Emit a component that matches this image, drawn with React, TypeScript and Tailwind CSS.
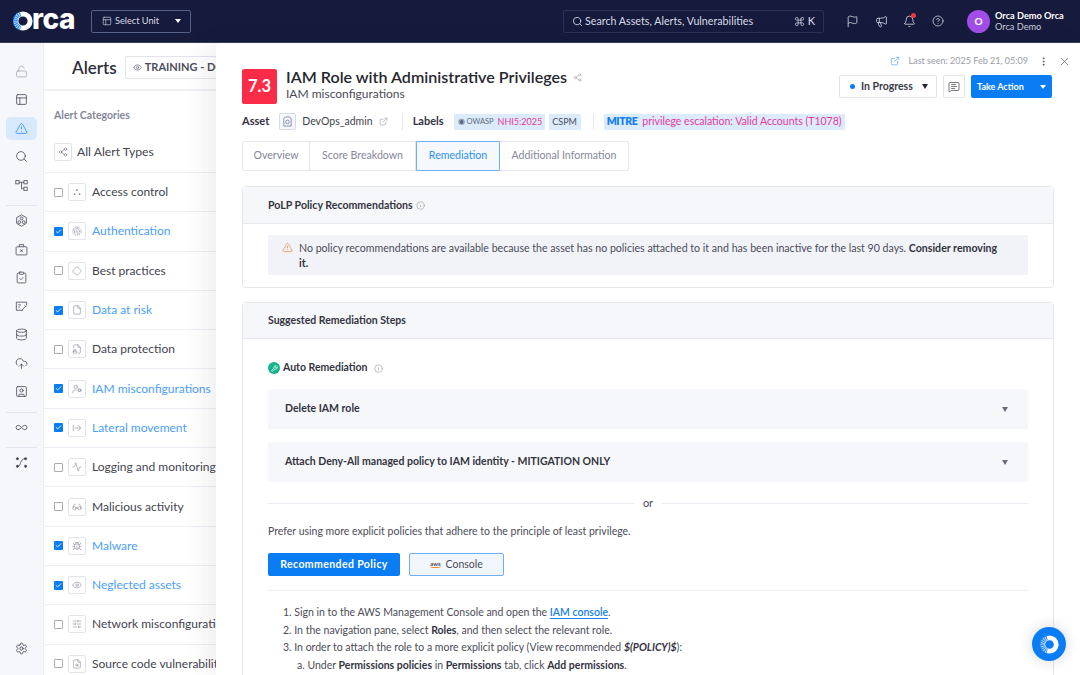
import { AlertTriangle, Bell, Check, Database, ExternalLink, Flag, HelpCircle, Info, PanelsTopLeft, LockOpen, Megaphone, MessageSquareText, MoreVertical, Search, Settings, Share2, X, Eye, Infinity as InfinityIcon, CloudUpload, ClipboardCheck, Fingerprint, File, FileLock2, UserCog, ArrowRightFromLine, Activity, Bug, Glasses, Diamond, SlidersHorizontal, FileSearch, Wrench, Command, SquareUser } from "lucide-react";
import type { ComponentType } from "react";

type IconType = ComponentType<{ className?: string; strokeWidth?: number }>;

function PipelineIcon({ className, strokeWidth = 1.5 }: { className?: string; strokeWidth?: number }) {
  return (
    <svg viewBox="0 0 24 24" fill="none" stroke="currentColor" strokeWidth={strokeWidth} className={className}>
      <rect x="1.5" y="3" width="6" height="6" />
      <rect x="16.5" y="3" width="6" height="6" />
      <rect x="16.5" y="15" width="6" height="6" />
      <path d="M7.5 6h9M12 6v12h4.5" />
    </svg>
  );
}

function ClusterIcon({ className, strokeWidth = 1.5 }: { className?: string; strokeWidth?: number }) {
  return (
    <svg viewBox="0 0 24 24" fill="none" stroke="currentColor" strokeWidth={strokeWidth} className={className}>
      <path d="M12 1.5 21 6.7v10.6l-9 5.2-9-5.2V6.7z" />
      <circle cx="12" cy="8" r="2.6" />
      <circle cx="8" cy="15" r="2.6" />
      <circle cx="16" cy="15" r="2.6" />
    </svg>
  );
}

function CaseXIcon({ className, strokeWidth = 1.5 }: { className?: string; strokeWidth?: number }) {
  return (
    <svg viewBox="0 0 24 24" fill="none" stroke="currentColor" strokeWidth={strokeWidth} className={className}>
      <rect x="2" y="7" width="20" height="15" rx="1.5" />
      <path d="M8 7V3h8v4M9.5 12l5 5M14.5 12l-5 5" />
    </svg>
  );
}

function ReportIcon({ className, strokeWidth = 1.5 }: { className?: string; strokeWidth?: number }) {
  return (
    <svg viewBox="0 0 24 24" fill="none" stroke="currentColor" strokeWidth={strokeWidth} className={className}>
      <path d="M14 19H2.5V4h19v6" />
      <path d="M6 9h5M6 13h3M12 20l7-8M18 10l3 3" />
    </svg>
  );
}

function PathDotsIcon({ className, strokeWidth = 1.5 }: { className?: string; strokeWidth?: number }) {
  return (
    <svg viewBox="0 0 24 24" fill="none" stroke="currentColor" strokeWidth={strokeWidth} className={className}>
      <path d="M5 19c7 0 3-14 14-14" />
      <circle cx="4.5" cy="5" r="2" fill="currentColor" />
      <circle cx="19.5" cy="5" r="2" fill="currentColor" />
      <circle cx="4.5" cy="19" r="2" fill="currentColor" />
      <circle cx="19.5" cy="19" r="2" fill="currentColor" />
    </svg>
  );
}

function DotsIcon({ className }: { className?: string; strokeWidth?: number }) {
  return (
    <svg viewBox="0 0 24 24" fill="currentColor" className={className}>
      <circle cx="12" cy="7" r="2.2" />
      <circle cx="6" cy="17" r="2.2" />
      <circle cx="18" cy="17" r="2.2" />
    </svg>
  );
}

const railTop: (IconType | "sep")[] = [LockOpen, PanelsTopLeft, AlertTriangle, Search, PipelineIcon, "sep", ClusterIcon, CaseXIcon, ClipboardCheck, ReportIcon, Database, CloudUpload, SquareUser, "sep", InfinityIcon, "sep", PathDotsIcon];

const categories: { label: string; on: boolean; icon: IconType }[] = [
  { label: "Access control", on: false, icon: DotsIcon },
  { label: "Authentication", on: true, icon: Fingerprint },
  { label: "Best practices", on: false, icon: Diamond },
  { label: "Data at risk", on: true, icon: File },
  { label: "Data protection", on: false, icon: FileLock2 },
  { label: "IAM misconfigurations", on: true, icon: UserCog },
  { label: "Lateral movement", on: true, icon: ArrowRightFromLine },
  { label: "Logging and monitoring", on: false, icon: Activity },
  { label: "Malicious activity", on: false, icon: Glasses },
  { label: "Malware", on: true, icon: Bug },
  { label: "Neglected assets", on: true, icon: Eye },
  { label: "Network misconfigurations", on: false, icon: SlidersHorizontal },
  { label: "Source code vulnerabilities", on: false, icon: FileSearch },
];

function OrcaRing({ className }: { className?: string }) {
  return (
    <svg viewBox="0 0 24 24" className={className}>
      <circle cx="12" cy="12" r="8.5" fill="none" stroke="#fff" strokeWidth="6" />
      <path d="M9 3.8A8.5 8.5 0 0 0 9 20.2" fill="none" stroke="#2b8cff" strokeWidth="6" strokeDasharray="1.6 .7" />
    </svg>
  );
}

function Header() {
  return (
    <header className="h-[43px] shrink-0 flex items-center bg-[#161a3c] border-b border-[#3a3d55] text-[#d7dbe6]">
      <div className="w-[91px] pl-[13px] flex items-center">
        <OrcaRing className="w-[20px] h-[20px]" />
        <span className="text-[28px] leading-none font-extrabold text-white -ml-[1px] -mt-[4px] font-['Inter','Liberation_Sans',sans-serif] tracking-[-0.5px]">rca</span>
      </div>
      <div className="w-[100px] h-[23px] flex items-center pl-[10px] pr-[9px] border border-[#56618a] rounded-[2px] text-[9.2px]">
        <PanelsTopLeft className="w-[10px] h-[10px] mr-[3px]" strokeWidth={1.5} />
        <span>Select Unit</span>
        <span className="ml-auto w-0 h-0 border-x-[3.5px] border-x-transparent border-t-[4.5px] border-t-white" />
      </div>
      <div className="ml-[372px] w-[261px] h-[23px] flex items-center pl-[8px] pr-[8px] border border-[#2c3156] rounded-[2px] text-[10.7px]">
        <Search className="w-[11px] h-[11px] mr-[2px]" strokeWidth={1.8} />
        <span>Search Assets, Alerts, Vulnerabilities</span>
        <span className="ml-auto flex items-center gap-[3px] text-[11px]"><Command className="w-[11px] h-[11px]" strokeWidth={1.6} />K</span>
      </div>
      <Flag className="ml-[22px] w-[13px] h-[13px]" strokeWidth={1.5} />
      <Megaphone className="ml-[16px] w-[13px] h-[13px]" strokeWidth={1.5} />
      <div className="relative ml-[15px]">
        <Bell className="w-[13px] h-[13px]" strokeWidth={1.5} />
        <span className="absolute -top-[2px] right-0 w-[5px] h-[5px] rounded-full bg-[#f0353f]" />
      </div>
      <HelpCircle className="ml-[16px] w-[12px] h-[12px]" strokeWidth={1.5} />
      <div className="ml-[23px] w-[23px] h-[23px] rounded-full bg-[#a24de8] flex items-center justify-center text-[10px] font-bold text-white">O</div>
      <div className="ml-[5px] leading-[11px]">
        <div className="text-[9.2px] font-bold text-white">Orca Demo Orca</div>
        <div className="text-[9.2px] text-[#c9cddb]">Orca Demo</div>
      </div>
    </header>
  );
}

function Rail() {
  return (
    <nav className="w-[44px] shrink-0 h-full bg-[#f6f7fb] border-r border-[#eceef4] flex flex-col items-center pt-[16.5px] pb-[20px]">
      {railTop.map((Item, i) =>
        Item === "sep" ? (
          <div key={i} className="w-[31px] h-px bg-[#e3e5ee] my-[3px]" />
        ) : (
          <div key={i} className={`w-[31px] h-[23px] mb-[5.5px] rounded-[5px] flex items-center justify-center ${i === 2 ? "bg-[#d8e9fb] text-[#1a86f7]" : i === 0 ? "text-[#a4a6b0]" : "text-[#3f4150]"}`}>
            <Item className="w-[13px] h-[13px]" strokeWidth={1.4} />
          </div>
        )
      )}
      <Settings className="mt-auto w-[13px] h-[13px] text-[#3f4150]" strokeWidth={1.6} />
    </nav>
  );
}

function CategoryRow({ label, on, icon: Icon }: { label: string; on: boolean; icon: IconType }) {
  return (
    <div className="h-[39.3px] shrink-0 flex items-center pl-[10px] border-t border-[#eceef4]">
      {on ? (
        <span className="w-[9px] h-[9px] rounded-[1px] bg-[#0a7df5] flex items-center justify-center"><Check className="w-[7px] h-[7px] text-white" strokeWidth={3} /></span>
      ) : (
        <span className="w-[9px] h-[9px] rounded-[1px] border border-[#a9abb5] bg-white" />
      )}
      <span className="ml-[5px] w-[18px] h-[18px] border border-[#e2e4ec] rounded-[2px] flex items-center justify-center text-[#85879a]"><Icon className="w-[10px] h-[10px]" strokeWidth={1.4} /></span>
      <span className={`ml-[6px] text-[12px] whitespace-nowrap ${on ? "text-[#4a9eff]" : "text-[#43444f]"}`}>{label}</span>
    </div>
  );
}

function AlertsPanel() {
  return (
    <div className="flex-1 h-full flex flex-col overflow-hidden">
      <div className="h-[48px] shrink-0 flex items-center pl-[28px] pt-[3px] border-b-[2px] border-[#f0f1f6]">
        <span className="text-[17px] font-semibold text-[#2e2f3c]">Alerts</span>
        <span className="ml-[8px] h-[23px] w-[140px] pl-[7px] flex items-center border border-[#e2e4ec] rounded-[2px] text-[11px] font-bold text-[#4c4e5c] whitespace-nowrap">
          <Eye className="w-[9px] h-[9px] mr-[3px]" strokeWidth={1.6} />TRAINING - DC
        </span>
      </div>
      <div className="h-[46px] shrink-0 pl-[10px] pt-[17px] text-[10.5px] font-bold text-[#85879a]">Alert Categories</div>
      <div className="h-[30px] shrink-0 flex items-center pl-[10px]">
        <span className="w-[18px] h-[18px] border border-[#e2e4ec] rounded-[2px] flex items-center justify-center text-[#6a6c7c]"><Share2 className="w-[10px] h-[10px]" strokeWidth={1.4} /></span>
        <span className="ml-[5px] text-[12.2px] text-[#43444f]">All Alert Types</span>
      </div>
      <div className="h-[5px] shrink-0" />
      {categories.map((c) => <CategoryRow key={c.label} {...c} />)}
    </div>
  );
}

function TitleBlock() {
  return (
    <div className="shrink-0 flex items-start pl-[26px] pr-[28px]">
      <div className="w-[35px] h-[35px] mt-[26px] rounded-[2px] bg-[#fb2c48] flex items-center justify-center text-white text-[16.5px] font-bold">7.3</div>
      <div className="ml-[9px] mt-[24px]">
        <div className="flex items-center">
          <h1 className="text-[16.1px] leading-[20px] font-semibold text-[#26272f]">IAM Role with Administrative Privileges</h1>
          <Share2 className="ml-[6px] w-[9px] h-[9px] text-[#9c9eaa]" strokeWidth={1.5} />
        </div>
        <div className="text-[12px] leading-[14px] text-[#4b4c58]">IAM misconfigurations</div>
      </div>
      <div className="ml-auto flex flex-col items-end">
        <div className="h-[16px] mt-[10px] flex items-center text-[9px] text-[#9a9ca8] -mr-[19px]">
          <ExternalLink className="w-[10px] h-[10px] text-[#4a9eff] mr-[9px]" strokeWidth={1.5} />
          <span>Last seen: 2025 Feb 21, 05:09</span>
          <MoreVertical className="ml-[10px] w-[11px] h-[11px] text-[#4c4e5c]" strokeWidth={2} />
          <X className="ml-[9px] w-[13px] h-[13px] text-[#5c5e6c]" strokeWidth={1.4} />
        </div>
        <div className="mt-[6px] flex items-center">
          <div className="w-[98px] h-[23px] flex items-center pl-[10px] pr-[8px] border border-[#e2e4ec] rounded-[2px] text-[10.5px] font-bold text-[#3a3b47]">
            <span className="w-[5px] h-[5px] rounded-full bg-[#0a7df5] mr-[6px]" />In Progress
            <span className="ml-auto w-0 h-0 border-x-[3.5px] border-x-transparent border-t-[5px] border-t-[#24252d]" />
          </div>
          <div className="ml-[6px] w-[22px] h-[23px] flex items-center justify-center border border-[#e2e4ec] rounded-[2px]"><MessageSquareText className="w-[12px] h-[12px] text-[#3a3b47]" strokeWidth={1.4} /></div>
          <div className="ml-[6px] w-[81px] h-[23px] flex items-center pl-[6px] pr-[6px] rounded-[2px] bg-[#0a7df5] text-[9px] font-bold text-white">
            Take Action
            <span className="ml-auto w-0 h-0 border-x-[3px] border-x-transparent border-t-[4px] border-t-white" />
          </div>
        </div>
      </div>
    </div>
  );
}

function AssetGlyph() {
  return (
    <svg viewBox="0 0 24 24" fill="none" stroke="currentColor" strokeWidth="1.6" className="w-[11px] h-[11px]">
      <path d="M7 2h10l3 4v16H4V5z" />
      <circle cx="12" cy="13" r="4" />
    </svg>
  );
}

function MetaRow() {
  return (
    <div className="shrink-0 h-[23px] mt-[6px] flex items-center pl-[26px] text-[11px] text-[#33343f]">
      <span className="font-bold">Asset</span>
      <span className="ml-[10px] w-[17px] h-[17px] border border-[#d6d9e6] bg-[#f6f8fc] rounded-[2px] flex items-center justify-center text-[#60739b]"><AssetGlyph /></span>
      <span className="ml-[6px] text-[10.5px] text-[#43444f]">DevOps_admin</span>
      <ExternalLink className="ml-[6px] w-[9px] h-[9px] text-[#8a8c98]" strokeWidth={1.4} />
      <span className="ml-[14px] w-px h-[17px] bg-[#e8e9f0]" />
      <span className="ml-[10px] font-bold">Labels</span>
      <span className="ml-[10px] w-[91px] h-[16px] pl-[4px] flex items-center rounded-[1px] bg-[#dcebfb] text-[9px] text-[#e6399b] whitespace-nowrap">
        <span className="text-[7.5px] text-[#5a6a80] mr-[4px]">◉ OWASP</span>NHI5:2025
      </span>
      <span className="ml-[4px] w-[32px] h-[16px] flex items-center justify-center rounded-[1px] bg-[#dcebfb] text-[9px] text-[#47505e]">CSPM</span>
      <span className="ml-[12px] w-px h-[17px] bg-[#e8e9f0]" />
      <span className="ml-[10px] h-[16px] px-[3px] flex items-center rounded-[1px] bg-[#dcebfb] text-[10.5px] text-[#e6399b] whitespace-nowrap">
        <span className="font-extrabold text-[#1480f0] mr-[5px] tracking-[-0.4px]">MITRE</span>privilege escalation: Valid Accounts (T1078)
      </span>
    </div>
  );
}

function Tabs() {
  const tabs = [
    { label: "Overview", w: "w-[67px]" },
    { label: "Score Breakdown", w: "w-[106px]" },
    { label: "Remediation", w: "w-[84px]" },
    { label: "Additional Information", w: "w-[128px]" },
  ];
  return (
    <div className="shrink-0 ml-[26px] mt-[8px] h-[30px] w-fit flex border border-[#e6e7ee] rounded-[2px] text-[10.6px] text-[#85879a]">
      {tabs.map((t) =>
        t.label === "Remediation" ? (
          <div key={t.label} className={`${t.w} -my-px flex items-center justify-center border border-[#6eaef2] bg-[#f5f9fe] text-[#2c8dfa] rounded-[1px]`}>{t.label}</div>
        ) : (
          <div key={t.label} className={`${t.w} flex items-center justify-center border-r border-[#e6e7ee] last:border-r-0`}>{t.label}</div>
        )
      )}
    </div>
  );
}

function PolicyCard() {
  return (
    <section className="mx-[26px] mt-[15px] border border-[#e6e7ee] rounded-[4px] shrink-0">
      <div className="h-[37px] pl-[25px] pt-[1px] flex items-center bg-[#f6f7fa] border-b border-[#e6e7ee] text-[10.6px] font-bold text-[#33343f]">
        PoLP Policy Recommendations<Info className="ml-[3px] w-[9px] h-[9px] text-[#8a8c98]" strokeWidth={1.4} />
      </div>
      <div className="px-[25px] pt-[11px] pb-[12px]">
        <div className="h-[40px] flex items-start bg-[#f1f3f8] rounded-[2px] pl-[14px] pr-[24px] pt-[6px] text-[10.6px] leading-[14.5px] text-[#4b4c58]">
          <AlertTriangle className="shrink-0 mt-[1px] w-[11px] h-[11px] text-[#f0883a]" strokeWidth={1.5} />
          <p className="ml-[6px]">No policy recommendations are available because the asset has no policies attached to it and has been inactive for the last 90 days. <b className="text-[#33343f]">Consider removing it.</b></p>
        </div>
      </div>
    </section>
  );
}

function Accordion({ label }: { label: string }) {
  return (
    <div className="h-[40px] flex items-center pl-[17px] pr-[20px] bg-[#f6f7fa] rounded-[2px] text-[10.5px] font-bold text-[#33343f]">
      {label}
      <span className="ml-auto w-0 h-0 border-x-[3.5px] border-x-transparent border-t-[5px] border-t-[#6a6c7c]" />
    </div>
  );
}

function RemediationCard() {
  return (
    <section className="shrink-0 mx-[26px] mt-[14px] border border-[#e6e7ee] rounded-t-[4px]">
      <div className="h-[36px] pl-[25px] pt-[1px] flex items-center bg-[#f6f7fa] border-b border-[#e6e7ee] text-[10.5px] font-bold text-[#33343f]">Suggested Remediation Steps</div>
      <div className="px-[25px] pb-[40px]">
        <div className="h-[20px] mt-[19px] flex items-center text-[10.5px] font-bold text-[#33343f]">
          <span className="w-[12px] h-[12px] rounded-full bg-[#12b48a] flex items-center justify-center mr-[3px]"><Wrench className="w-[7px] h-[7px] text-white" strokeWidth={2.4} /></span>
          Auto Remediation<Info className="ml-[6px] w-[9px] h-[9px] text-[#8a8c98]" strokeWidth={1.4} />
        </div>
        <div className="mt-[11px] flex flex-col gap-[13px]">
          <Accordion label="Delete IAM role" />
          <Accordion label="Attach Deny-All managed policy to IAM identity - MITIGATION ONLY" />
        </div>
        <div className="mt-[13px] h-[16px] flex items-center gap-[8px] text-[11px] text-[#4b4c58]">
          <span className="flex-1 h-px bg-[#eceef4]" />or<span className="flex-1 h-px bg-[#eceef4]" />
        </div>
        <p className="mt-[13px] text-[10.5px] leading-[14px] text-[#4b4c58]">Prefer using more explicit policies that adhere to the principle of least privilege.</p>
        <div className="mt-[15px] flex items-center gap-[9px]">
          <div className="w-[132px] h-[23px] flex items-center justify-center bg-[#0a7df5] rounded-[2px] text-[10.5px] font-bold tracking-[0.4px] text-white">Recommended Policy</div>
          <div className="w-[95px] h-[23px] flex items-center justify-center gap-[5px] bg-[#f1f6fc] border border-[#6eaef2] rounded-[2px] text-[10.5px] text-[#4b4c58]">
            <span className="text-[6px] font-bold leading-[6px] text-[#4b4c58] border-b border-[#f0883a] rounded-b-[3px]">aws</span>Console
          </div>
        </div>
        <div className="mt-[14px] pt-[13px] border-t border-[#eceef4] pl-[15px] text-[10.5px] leading-[17.6px] text-[#4b4c58]">
          <div>1. Sign in to the AWS Management Console and open the <a className="text-[#1480f0] font-semibold underline underline-offset-2">IAM console</a>.</div>
          <div>2. In the navigation pane, select <b className="text-[#33343f]">Roles</b>, and then select the relevant role.</div>
          <div>3. In order to attach the role to a more explicit policy (View recommended <b className="italic text-[#33343f]">$(POLICY)$</b>):</div>
          <div className="pl-[14px]">a. Under <b className="text-[#33343f]">Permissions policies</b> in <b className="text-[#33343f]">Permissions</b> tab, click <b className="text-[#33343f]">Add permissions</b>.</div>
        </div>
      </div>
    </section>
  );
}

export default function App() {
  return (
    <div className="w-[1080px] h-[675px] overflow-hidden flex flex-col bg-white font-['Lato','Noto_Sans',sans-serif]">
      <Header />
      <div className="relative flex-1 flex min-h-0">
        <Rail />
        <AlertsPanel />
        <div className="absolute left-[216px] right-0 top-0 bottom-0 bg-white rounded-tl-[5px] shadow-[-10px_0_24px_rgba(30,32,60,0.07)] flex flex-col overflow-hidden">
          <TitleBlock />
          <MetaRow />
          <Tabs />
          <PolicyCard />
          <RemediationCard />
        </div>
        <div className="absolute right-[14px] bottom-[14px] w-[34px] h-[34px] rounded-full bg-[#0a7df5] flex items-center justify-center shadow-[0_0_14px_rgba(30,32,60,0.18)]">
          <OrcaRing className="w-[19px] h-[19px]" />
        </div>
      </div>
    </div>
  );
}
